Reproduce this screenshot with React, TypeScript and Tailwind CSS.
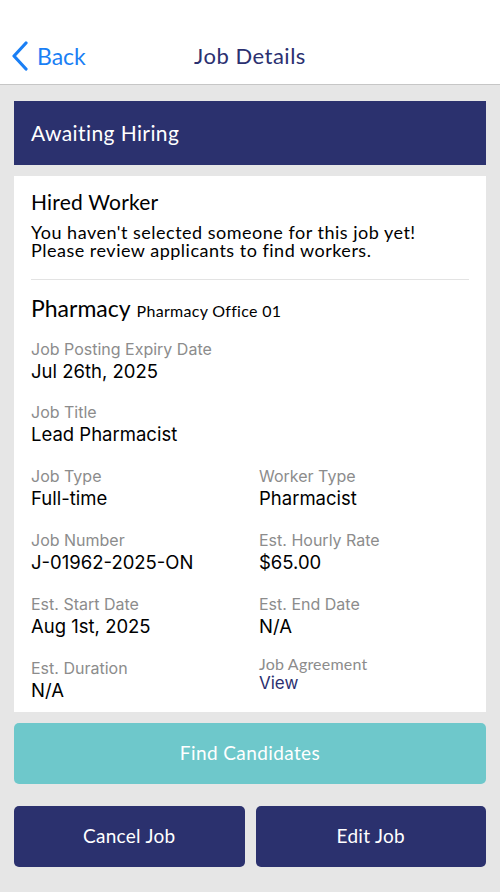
import React from 'react';

const brand = "font-['Lato','Noto_Sans',sans-serif]";
const sys = "font-['Inter','Roboto',sans-serif]";

type Field = { label: string; value: string };

const rows: [Field, Field | null][] = [
  [{ label: 'Job Title', value: 'Lead Pharmacist' }, null],
  [{ label: 'Job Type', value: 'Full-time' }, { label: 'Worker Type', value: 'Pharmacist' }],
  [{ label: 'Job Number', value: 'J-01962-2025-ON' }, { label: 'Est. Hourly Rate', value: '$65.00' }],
  [{ label: 'Est. Start Date', value: 'Aug 1st, 2025' }, { label: 'Est. End Date', value: 'N/A' }],
];

function Item({ f }: { f: Field }) {
  return (
    <div className={sys}>
      <div className="text-[16px] leading-[21px] text-[#8c8c8c]">{f.label}</div>
      <div className="text-[18.5px] leading-[22px] text-black">{f.value}</div>
    </div>
  );
}

export default function App() {
  return (
    <div className="w-[500px] h-[892px] bg-[#e6e6e6] overflow-hidden">
      {/* nav bar */}
      <div className="h-[85px] bg-white border-b border-[#c6c6c6] relative">
        <div className="absolute left-0 top-[38px] flex items-center h-[36px]">
          <svg width="30" height="30" viewBox="0 0 30 30" className="ml-[5px]">
            <path d="M21 2 L9 15 L21 28" fill="none" stroke="#1a7ff5" strokeWidth="3.2" strokeLinecap="round" strokeLinejoin="round" />
          </svg>
          <span className={`${brand} text-[23px] text-[#1a7ff5] ml-[2px]`}>Back</span>
        </div>
        <div className={`absolute inset-x-0 top-[37px] h-[36px] flex items-center justify-center ${brand} text-[22px] tracking-[0.5px] text-[#2b3070]`}>
          Job Details
        </div>
      </div>

      <div className="px-[14px] pt-[16px]">
        <div className={`h-[64px] bg-[#2b316e] flex items-center px-[17px] ${brand} text-[21px] tracking-[0.4px] text-white`}>
          Awaiting Hiring
        </div>

        <div className="mt-[11px] bg-white px-[17px] pt-[13px] pb-[11px]">
          <div className={`${brand} text-[21px] tracking-[0.2px] leading-[26px] text-black`}>Hired Worker</div>
          <div className={`${brand} mt-[8px] text-[18px] tracking-[0.5px] text-black`}>
            <div className="leading-[18px]">You haven't selected someone for this job yet!</div>
            <div className="leading-[18px]">Please review applicants to find workers.</div>
          </div>
          <div className="mt-[20px] h-px bg-[#e3e3e3]" />
          <div className={`${brand} mt-[11px] h-[28px] flex items-baseline text-black`}>
            <span className="text-[23px]">Pharmacy</span>
            <span className="text-[16px] tracking-[0.3px] ml-[6px]">Pharmacy Office 01</span>
          </div>

          <div className="mt-[20px]">
            <Item f={{ label: 'Job Posting Expiry Date', value: 'Jul 26th, 2025' }} />
          </div>

          <div className="mt-[20px] grid grid-cols-2 gap-x-[10px] gap-y-[21px]">
            {rows.map(([a, b], i) => (
              <React.Fragment key={i}>
                <Item f={a} />
                {b ? <div className="pl-[4px]"><Item f={b} /></div> : <div />}
              </React.Fragment>
            ))}
            <Item f={{ label: 'Est. Duration', value: 'N/A' }} />
            <div className="pl-[4px] -mt-[4px]">
              <div className={`${brand} text-[16px] tracking-[0.2px] leading-[20px] text-[#8c8c8c]`}>Job Agreement</div>
              <div className={`${sys} text-[17px] leading-[18px] text-[#2b3070]`}>View</div>
            </div>
          </div>
        </div>

        <button className={`mt-[11px] w-full h-[61px] rounded-[5px] bg-[#6ec8cb] text-white text-[19px] tracking-[0.4px] ${brand}`}>
          Find Candidates
        </button>

        <div className="mt-[22px] flex gap-[11px]">
          <button className={`flex-1 h-[61px] rounded-[5px] bg-[#2b316e] text-white text-[19px] tracking-[0.3px] ${brand}`}>Cancel Job</button>
          <button className={`flex-1 h-[61px] rounded-[5px] bg-[#2b316e] text-white text-[19px] tracking-[0.3px] ${brand}`}>Edit Job</button>
        </div>
      </div>
    </div>
  );
}
